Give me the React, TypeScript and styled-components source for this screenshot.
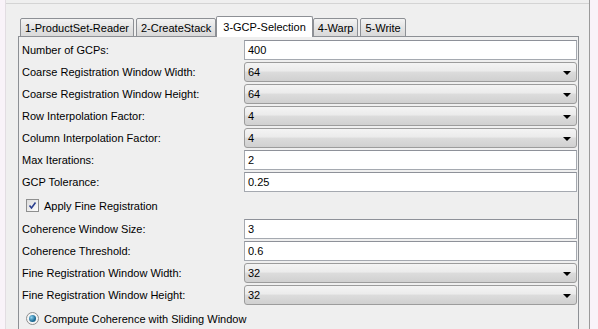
import React from 'react'
import styled, {createGlobalStyle} from 'styled-components'

const GlobalStyle = createGlobalStyle`
  html, body {
    margin: 0;
    padding: 0;
    background: #f9f3f9;
    font-family: "Liberation Sans", Arial, sans-serif;
    font-size: 11px;
    color: #000;
  }
`

const Frame = styled.div`
  margin-left: 5px;
  width: 585px;
  height: 329px;
  background: #efefef;
  border-left: 1px solid #e2dde2;
  border-right: 1px solid #9a9a9a;
  box-sizing: border-box;
  padding: 16px 0 0 12px;
  overflow: hidden;
  position: relative;
  &::before {
    content: '';
    position: absolute;
    left: 0;
    right: 0;
    top: 3px;
    border-top: 1px solid #d4d4d4;
  }
`

const TabBar = styled.div`
  display: flex;
  align-items: flex-end;
  height: 21px;
  padding-left: 2px;
  gap: 2px;
`

const Tab = styled.div<{$active?: boolean}>`
  height: ${({$active}) => ($active ? 21 : 19)}px;
  box-sizing: border-box;
  padding: 0 ${({$active}) => ($active ? 6 : 4)}px;
  margin: 0 ${({$active}) => ($active ? -2 : 0)}px;
  display: flex;
  align-items: center;
  border: 1px solid #8d9095;
  border-bottom: ${({$active}) => ($active ? 'none' : '1px solid #8d9095')};
  border-radius: 2px 2px 0 0;
  background: ${({$active}) =>
    $active ? '#ffffff' : 'linear-gradient(#f3f3f3, #e4e4e4 50%, #d9d9d9)'};
  position: relative;
  z-index: ${({$active}) => ($active ? 2 : 1)};
  white-space: nowrap;
`

const Panel = styled.div`
  width: 561px;
  border: 1px solid #8d9095;
  margin-top: -1px;
  background: #efefef;
  padding: 3px 1px 0 3px;
  box-sizing: border-box;
  height: 300px;
`

const Form = styled.div`
  display: grid;
  grid-template-columns: 222px 1fr;
  align-items: center;
  row-gap: 2px;
`

const Label = styled.div`
  height: 20px;
  line-height: 20px;
  white-space: nowrap;
`

const TextField = styled.div`
  height: 20px;
  box-sizing: border-box;
  border: 1px solid #a5a9b0;
  border-top-color: #8e9199;
  background: #fff;
  padding: 0 3px;
  line-height: 19px;
`

const Combo = styled.div`
  height: 20px;
  box-sizing: border-box;
  border: 1px solid #9c9c9c;
  border-radius: 3px;
  background: linear-gradient(#f4f4f4, #ebebeb 45%, #dcdcdc 50%, #d0d0d0);
  padding: 0 3px;
  display: flex;
  align-items: center;
  justify-content: space-between;
`

const Arrow = styled.span`
  width: 0;
  height: 0;
  border-left: 4px solid transparent;
  border-right: 4px solid transparent;
  border-top: 4px solid #000;
  margin-right: 2px;
  margin-top: 2px;
`

const OptionRow = styled.div`
  grid-column: 1 / -1;
  display: flex;
  align-items: center;
  gap: 5px;
  height: 23px;
  padding-left: 4px;
`

const CheckBox = styled.span`
  width: 11px;
  height: 11px;
  border: 1px solid #8e8f8f;
  background: linear-gradient(135deg, #dcdcdc, #fdfdfd);
  display: flex;
  align-items: center;
  justify-content: center;
`

const Radio = styled.span`
  width: 11px;
  height: 11px;
  border-radius: 50%;
  border: 1px solid #8e8f8f;
  background: #f4f4f4;
  display: flex;
  align-items: center;
  justify-content: center;
  &::after {
    content: '';
    width: 7px;
    height: 7px;
    border-radius: 50%;
    background: radial-gradient(circle at 35% 35%, #8fd2ef, #1c6c97 60%, #0e4a6e);
  }
`

type Field = {label: string; value: string; combo?: boolean}

const top: Field[] = [
  {label: 'Number of GCPs:', value: '400'},
  {label: 'Coarse Registration Window Width:', value: '64', combo: true},
  {label: 'Coarse Registration Window Height:', value: '64', combo: true},
  {label: 'Row Interpolation Factor:', value: '4', combo: true},
  {label: 'Column Interpolation Factor:', value: '4', combo: true},
  {label: 'Max Iterations:', value: '2'},
  {label: 'GCP Tolerance:', value: '0.25'},
]

const fine: Field[] = [
  {label: 'Coherence Window Size:', value: '3'},
  {label: 'Coherence Threshold:', value: '0.6'},
  {label: 'Fine Registration Window Width:', value: '32', combo: true},
  {label: 'Fine Registration Window Height:', value: '32', combo: true},
]

const renderField = (f: Field) => (
  <React.Fragment key={f.label}>
    <Label>{f.label}</Label>
    {f.combo ? (
      <Combo>
        <span>{f.value}</span>
        <Arrow />
      </Combo>
    ) : (
      <TextField>{f.value}</TextField>
    )}
  </React.Fragment>
)

const tabs = ['1-ProductSet-Reader', '2-CreateStack', '3-GCP-Selection', '4-Warp', '5-Write']

export default function App() {
  return (
    <>
      <GlobalStyle />
      <Frame>
        <TabBar>
          {tabs.map((t, i) => (
            <Tab key={t} $active={i === 2}>
              {t}
            </Tab>
          ))}
        </TabBar>
        <Panel>
          <Form>
            {top.map(renderField)}
            <OptionRow>
              <CheckBox>
                <svg width="9" height="9" viewBox="0 0 9 9">
                  <path d="M1.5 4.5 L3.5 7 L7.5 1.5" fill="none" stroke="#2a3f8f" strokeWidth="1.6" />
                </svg>
              </CheckBox>
              Apply Fine Registration
            </OptionRow>
            {fine.map(renderField)}
            <OptionRow>
              <Radio />
              Compute Coherence with Sliding Window
            </OptionRow>
          </Form>
        </Panel>
      </Frame>
    </>
  )
}
